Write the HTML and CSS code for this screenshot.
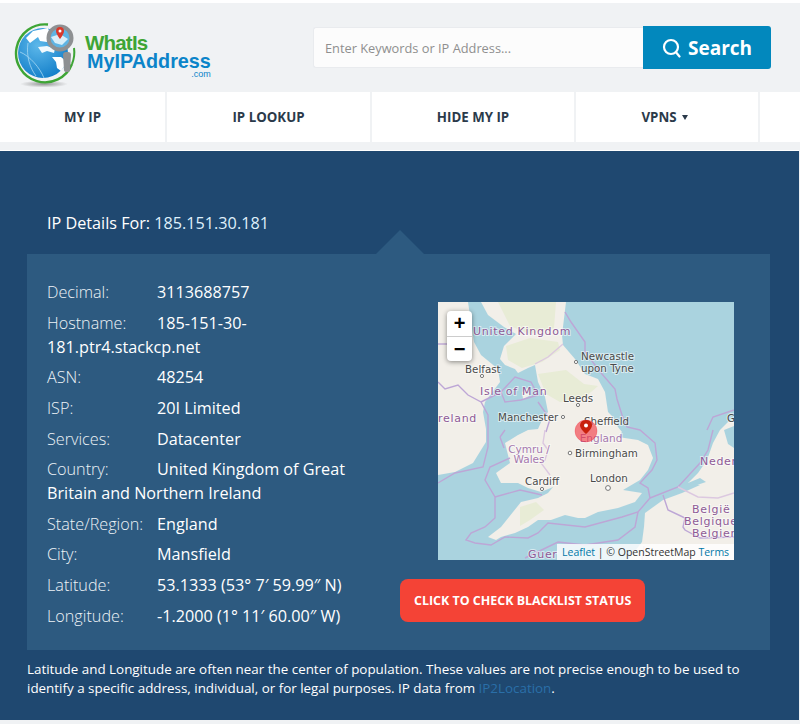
FILE: index.html
```html
<!DOCTYPE html>
<html lang="en">
<head>
  <meta charset="UTF-8">
  <title>What Is My IP Address</title>
  <meta name="viewport" content="width=device-width, initial-scale=1.0">
  <link rel="stylesheet" href="styles.css">
</head>
<body>
  <header class="top-bar">
    <a class="logo" href="#">
      <svg class="logo-globe" width="66" height="66" viewBox="0 0 66 66">
        <defs>
          <radialGradient id="sea" cx="40%" cy="35%" r="75%">
            <stop offset="0" stop-color="#5db8ea"/>
            <stop offset="1" stop-color="#0c79c6"/>
          </radialGradient>
          <radialGradient id="shadow" cx="50%" cy="50%" r="50%">
            <stop offset="0" stop-color="#555" stop-opacity=".6"/>
            <stop offset="1" stop-color="#555" stop-opacity="0"/>
          </radialGradient>
        </defs>
        <ellipse cx="30" cy="62" rx="24" ry="3.5" fill="url(#shadow)"/>
        <circle cx="29" cy="31" r="25" fill="url(#sea)"/>
        <path d="M12 16 L19 9 L34 6 L36 12 L33 20 L26 19 L24 15 L16 21Z" fill="#fff"/>
        <path d="M24 25 L33 24 L41 27 L40 31 L33 29 L28 31Z" fill="#f1f9fd"/>
        <path d="M38 35 L47 35 L53 40 L47 49 L43 46 L42 40Z" fill="#fff"/>
        <path d="M6 30 C16 34 26 46 30 56 M14 21 C12 34 16 46 22 54" fill="none" stroke="#a7d8f2" stroke-width=".8"/>
        <path d="M34 2.500 A29 29 0 1 0 58 42" fill="none" stroke="#3ea535" stroke-width="2.400"/>
        <path d="M60 26 A30 30 0 0 1 58 42" fill="none" stroke="#3ea535" stroke-width="2"/>
        <circle cx="46" cy="16" r="11.500" fill="#5fb4e3" stroke="#8e9092" stroke-width="4"/>
        <path d="M37 15 L46 12 L54 17 L48 23 L41 21Z" fill="#d9eef8"/>
        <path d="M50 48 L49 33 Q49 30 52 30 L54 30 Q57 30 57 33 L56 48 Q56 50 53 50 Q50 50 50 48Z" fill="#8e9092"/>
        <path d="M46 5 C43 5 42 7 42 9 C42 12 46 17 46 17 C46 17 50 12 50 9 C50 7 49 5 46 5Z" fill="#d8392b"/>
        <circle cx="46" cy="9" r="1.500" fill="#fff"/>
      </svg>
      <span class="logo-text">
        <span class="logo-what">WhatIs</span>
        <span class="logo-my">MyIPAddress</span>
        <span class="logo-com">.com</span>
      </span>
    </a>
    <form class="search">
      <input class="search-input" type="text" placeholder="Enter Keywords or IP Address...">
      <button class="search-btn" type="button">
        <svg width="20" height="20" viewBox="0 0 20 20" fill="none" stroke="#fff" stroke-width="2.2" stroke-linecap="round">
          <circle cx="9" cy="9" r="7"/>
          <path d="M13.800 14 L17.500 18.500"/>
        </svg>
        Search
      </button>
    </form>
  </header>

  <nav class="main-nav">
    <a class="nav-item nav-a" href="#">MY IP</a>
    <a class="nav-item nav-b" href="#">IP LOOKUP</a>
    <a class="nav-item nav-c" href="#">HIDE MY IP</a>
    <a class="nav-item nav-d" href="#">VPNS <span class="caret"></span></a>
    <span class="nav-item nav-e"></span>
  </nav>

  <section class="details">
    <h1 class="details-title">IP Details For: <span class="ip">185.151.30.181</span></h1>
    <div class="panel">
      <div class="info">
        <p class="row"><span class="label">Decimal:</span>3113688757</p>
        <p class="row"><span class="label">Hostname:</span>185-151-30-181.ptr4.stackcp.net</p>
        <p class="row"><span class="label">ASN:</span>48254</p>
        <p class="row"><span class="label">ISP:</span>20I Limited</p>
        <p class="row"><span class="label">Services:</span>Datacenter</p>
        <p class="row"><span class="label">Country:</span>United Kingdom of Great Britain and Northern Ireland</p>
        <p class="row"><span class="label">State/Region:</span>England</p>
        <p class="row"><span class="label">City:</span>Mansfield</p>
        <p class="row"><span class="label">Latitude:</span>53.1333 (53° 7′ 59.99″ N)</p>
        <p class="row"><span class="label">Longitude:</span>-1.2000 (1° 11′ 60.00″ W)</p>
      </div>
      <div class="side">
        <div class="map">
          <svg class="map-art" width="296" height="258" viewBox="0 0 296 258">
            <defs>
              <filter id="soft" x="-5%" y="-5%" width="110%" height="110%">
                <feGaussianBlur stdDeviation="0.6"/>
              </filter>
            </defs>
            <rect width="296" height="258" fill="#aad3df"/>
            <g filter="url(#soft)">
              <!-- britain -->
              <path class="land" d="M43 0 L50 13 L66 25 L78 32 L66 44 L62 57 L67 63 L77 67 L80 71 L90 66 L97 63 L100 80 L107 95 L110 110 L104 118 L100 127 L90 128 L80 133 L67 141 L72 161 L58 171 L63 181 L80 181 L90 186 L103 190 L115 185 L110 191 L100 196 L83 200 L75 210 L63 225 L50 235 L58 238 L63 235 L77 231 L90 225 L100 218 L113 218 L127 213 L140 216 L147 216 L160 210 L180 206 L197 200 L204 191 L185 188 L202 178 L210 168 L215 156 L210 143 L200 138 L180 135 L184 130 L180 125 L175 115 L170 110 L167 90 L160 77 L147 72 L137 57 L125 43 L124 33 L128 0Z"/>
              <path class="land-green" d="M68 44 L92 36 L120 40 L122 48 L104 60 L84 66 L70 58Z"/>
              <path class="land-green" d="M100 72 L128 68 L146 82 L160 84 L146 96 L122 100 L108 92Z"/>
              <path class="land-green" d="M60 0 L118 0 L116 26 L92 32 L72 24Z"/>
              <path class="land-green" d="M82 205 L98 200 L106 208 L92 218 L82 224Z"/>
              <!-- ireland -->
              <path class="land" d="M0 0 L30 0 L36 40 L43 53 L60 67 L62 80 L47 100 L45 110 L48 127 L48 140 L43 148 L35 161 L17 170 L0 173Z"/>
              <!-- isle of man -->
              <path class="land" d="M84 90 L90 86 L91 94 L85 97Z"/>
              <!-- continent -->
              <path class="land" d="M190 258 L204 240 L206 225 L207 211 L225 198 L244 191 L262 183 L250 181 L260 171 L269 158 L275 141 L282 128 L290 120 L296 118 L296 258Z"/>
              <path class="sea-cut" d="M250 186 L268 180 L262 176 L250 181Z"/>
              <path class="sea-cut" d="M286 128 L296 124 L296 146 L290 142Z"/>
            </g>
            <!-- borders -->
            <path class="border" d="M127 10 L133 20 L147 40 L147 50 L164 72 L177 87 L179 97 L184 113 L189 125 L202 128 L217 141 L219 158 L214 168 L202 181 L210 186 L212 196 L200 210 L184 215 L147 225 L110 221 L100 231 L90 236 L67 235 L53 243 L37 241 L28 238 L33 231 L47 225 L57 216 L57 195 L47 178 L52 165 L72 156"/>
            <path class="border" d="M57 195 L82 188 L104 193"/>
            <path class="border" d="M62 135 L67 128 M62 135 L66 146"/>
            <path class="border" d="M50 128 L50 145 L45 165 L17 171 L0 181"/>
            <path class="border" d="M63 90 L77 75 L93 80 L100 93 L83 98 L67 100Z"/>
            <path class="border" d="M0 80 L7 87 L20 83 L30 93 L43 100 L50 113 L50 128"/>
            <path class="border" d="M43 100 L63 90 M100 100 L112 117 L108 130"/>
            <path class="border" d="M0 42 L10 42"/>
            <path class="border pale" d="M97 62 L110 55 L125 42"/>
            <path class="border pale" d="M107 128 L105 141 L110 148 L107 158 L103 161 L112 173"/>
            <path class="border" d="M212 196 L240 185 L262 161 L270 148 L275 128"/>
            <path class="border" d="M269 128 L275 115 L296 108"/>
            <path class="border" d="M200 210 L197 225 L180 238 L147 243 L120 240 L87 256"/>
            <path class="border" d="M225 193 L230 208 L247 216 L245 225 L247 228 L262 236 L296 235"/>
            <path class="border pale" d="M240 185 L260 195 L280 196 L296 191"/>
            <path class="border pale" d="M206 244 L204 258"/>
            <text class="mp-country" x="35" y="33">United Kingdom</text>
            <text class="mp-country" x="42" y="93">Isle of Man</text>
            <text class="mp-country" x="0" y="120">reland</text>
            <text class="mp-small" x="91" y="151" text-anchor="middle">Cymru /</text>
            <text class="mp-small" x="91" y="161" text-anchor="middle">Wales</text>
            <text class="mp-small" x="163" y="140" text-anchor="middle">England</text>
            <text class="mp-country" x="262" y="163">Neder</text>
            <text class="mp-country" x="254" y="211">België</text>
            <text class="mp-country" x="246" y="223">Belgique</text>
            <text class="mp-country" x="254" y="235">Belgien</text>
            <text class="mp-country" x="90" y="256">Guer</text>
            <text class="mp-city" x="143" y="58">Newcastle</text>
            <text class="mp-city" x="143" y="70">upon Tyne</text>
            <text class="mp-city" x="27" y="71">Belfast</text>
            <text class="mp-city" x="125" y="100">Leeds</text>
            <text class="mp-city" x="60" y="119">Manchester</text>
            <text class="mp-city" x="146" y="123">Sheffield</text>
            <text class="mp-city" x="137" y="155">Birmingham</text>
            <text class="mp-city" x="87" y="183">Cardiff</text>
            <text class="mp-city" x="152" y="180">London</text>
            <text class="mp-city" x="289" y="120">G</text>
            <circle class="town" cx="132" cy="151" r="1.800"/>
            <circle class="town" cx="170" cy="186" r="2.400"/>
            <circle class="town" cx="104" cy="187" r="1.600"/>
            <circle class="town" cx="138" cy="60" r="1.600"/>
            <circle class="town" cx="44" cy="74" r="1.600"/>
            <circle class="town" cx="140" cy="103" r="1.600"/>
            <circle class="town" cx="125" cy="115" r="1.600"/>
            <!-- marker -->
            <circle cx="148" cy="129" r="11" fill="#f2303c" fill-opacity=".6" stroke="#f2303c" stroke-opacity=".3"/>
            <path d="M148 118 C144 118 142 121 142 123.500 C142 127 148 132 148 132 C148 132 154 127 154 123.500 C154 121 152 118 148 118Z" fill="#c8200c"/>
            <circle cx="148" cy="123.500" r="2" fill="#fff"/>
          </svg>
          <div class="zoom-ctl">
            <a class="zoom-btn" href="#">+</a>
            <a class="zoom-btn" href="#">−</a>
          </div>
          <div class="attrib"><a href="#">Leaflet</a> | © OpenStreetMap <a href="#">Terms</a></div>
        </div>
        <a class="check-btn" href="#">CLICK TO CHECK BLACKLIST STATUS</a>
      </div>
    </div>
    <p class="note">Latitude and Longitude are often near the center of population. These values are not precise enough to be used to identify a specific address, individual, or for legal purposes. IP data from <a href="#">IP2Location</a>.</p>
  </section>
</body>
</html>
```

FILE: styles.css
```css
* {
  margin: 0;
  padding: 0;
  box-sizing: border-box;
}
body {
  background: #f0f2f4;
  font-family: "Open Sans", sans-serif;
  border-top: 3px solid #fff;
  height: 724px;
  overflow: hidden;
}
a {
  text-decoration: none;
}

.top-bar {
  display: flex;
  justify-content: space-between;
  align-items: flex-start;
  height: 89px;
  padding: 23px 29px 0 14px;
}
.logo {
  display: flex;
  align-items: flex-start;
  gap: 5px;
}
.logo-globe {
  margin-top: -4px;
}
.logo-text {
  display: flex;
  flex-direction: column;
  font-family: "Liberation Sans", sans-serif;
  font-weight: bold;
  padding-top: 7px;
}
.logo-what {
  color: #3ea535;
  font-size: 20.5px;
  line-height: 19px;
  letter-spacing: -.8px;
}
.logo-my {
  color: #0b84c9;
  font-size: 19.8px;
  line-height: 18px;
  margin-left: 2px;
}
.logo-com {
  color: #0b84c9;
  font-size: 9px;
  font-weight: normal;
  line-height: 9px;
  text-align: right;
}
.search {
  display: flex;
}
.search-input {
  width: 330px;
  height: 41px;
  margin-top: 1px;
  padding-left: 11px;
  border: 1px solid #e9ebee;
  border-right: none;
  border-radius: 3px 0 0 3px;
  background: #fcfcfc;
  font-family: "Open Sans", sans-serif;
  font-size: 12.8px;
}
.search-input::placeholder {
  color: #8f8f8f;
  opacity: 1;
}
.search-btn {
  display: flex;
  align-items: center;
  justify-content: center;
  gap: 6px;
  width: 128px;
  height: 43px;
  border: none;
  border-radius: 0 3px 3px 0;
  background: #0288bd;
  color: #fff;
  font-family: "Open Sans", sans-serif;
  font-size: 19px;
  font-weight: 700;
}

.main-nav {
  display: flex;
  gap: 2px;
  height: 50px;
}
.nav-item {
  display: flex;
  align-items: center;
  justify-content: center;
  gap: 5px;
  background: #fff;
  color: #2b3a4a;
  font-size: 13.3px;
  font-weight: 700;
}
.nav-a { width: 165px; }
.nav-b { width: 203px; }
.nav-c { width: 202px; }
.nav-d {
  width: 182px;
  padding-right: 5px;
}
.nav-e { flex: 1; }
.caret {
  border-left: 3px solid transparent;
  border-right: 3px solid transparent;
  border-top: 5px solid #2b3a4a;
}

.details {
  margin-top: 8px;
  height: 570px;
  width: 799px;
  padding: 61px 29px 0 27px;
  background: #1f4870;
  border-top: 1px solid #fff;
  color: #fff;
}
.details-title {
  padding-left: 20px;
  margin-bottom: 19px;
  font-size: 16.2px;
  font-weight: 400;
  line-height: 24px;
  margin-top: -1px;
}
.ip {
  color: #dff0fb;
}

.panel {
  position: relative;
  display: flex;
  height: 396px;
  padding: 26px 0 0 20px;
  background: #2d5a80;
}
.panel::before {
  content: "";
  position: absolute;
  top: -24px;
  left: 349px;
  border-left: 24px solid transparent;
  border-right: 24px solid transparent;
  border-bottom: 24px solid #2d5a80;
}
.info {
  width: 333px;
}
.row {
  margin-bottom: 6.65px;
  font-size: 16.2px;
  line-height: 24px;
}
.label {
  display: inline-block;
  width: 110px;
  font-weight: 300;
  color: #eef3f7;
}
.side {
  display: flex;
  flex-direction: column;
  align-items: flex-start;
  margin-left: 20px;
  padding-top: 22px;
}
.map {
  position: relative;
  width: 296px;
  height: 258px;
  margin-left: 38px;
  overflow: hidden;
}
.map-art {
  display: block;
}
.land { fill: #f2efe9; }
.land-green { fill: #e8ecd6; }
.sea-cut { fill: #aad3df; }
.town {
  fill: #fff;
  stroke: #777;
}
.border {
  fill: none;
  stroke: #bda6d6;
  stroke-width: 1.4;
}
.border.pale {
  stroke: #dcc8e0;
}
.map-art text {
  font-family: "DejaVu Sans", sans-serif;
  paint-order: stroke;
  stroke: rgba(255,255,255,.55);
  stroke-width: 2px;
}
.mp-country {
  fill: #8e5a96;
  font-size: 11px;
  letter-spacing: .7px;
}
.mp-small {
  fill: #a679ae;
  font-size: 10.5px;
}
.mp-city {
  fill: #4a4a4a;
  font-size: 10.3px;
}
.zoom-ctl {
  position: absolute;
  top: 9px;
  left: 9px;
  display: flex;
  flex-direction: column;
  border-radius: 4px;
  background: #fff;
  box-shadow: 0 1px 5px rgba(0,0,0,.45);
}
.zoom-btn {
  width: 25px;
  height: 25px;
  color: #000;
  font-family: "Liberation Sans", sans-serif;
  font-size: 20px;
  font-weight: bold;
  line-height: 24px;
  text-align: center;
}
.zoom-btn + .zoom-btn {
  border-top: 1px solid #ccc;
}
.attrib {
  position: absolute;
  right: 0;
  bottom: 0;
  width: 177px;
  padding-left: 5px;
  background: rgba(255,255,255,.8);
  color: #333;
  font-family: "Open Sans", sans-serif;
  font-size: 10.5px;
  line-height: 16px;
}
.attrib a {
  color: #0078a8;
}
.check-btn {
  margin-top: 19px;
  padding: 0 14px;
  height: 43px;
  border-radius: 8px;
  background: #f44336;
  color: #fff;
  font-size: 12.45px;
  font-weight: 700;
  line-height: 43px;
}
.note {
  margin-top: 10px;
  width: 744px;
  font-size: 13.4px;
  line-height: 18.7px;
}
.note a {
  color: #2a6fa8;
}
```
